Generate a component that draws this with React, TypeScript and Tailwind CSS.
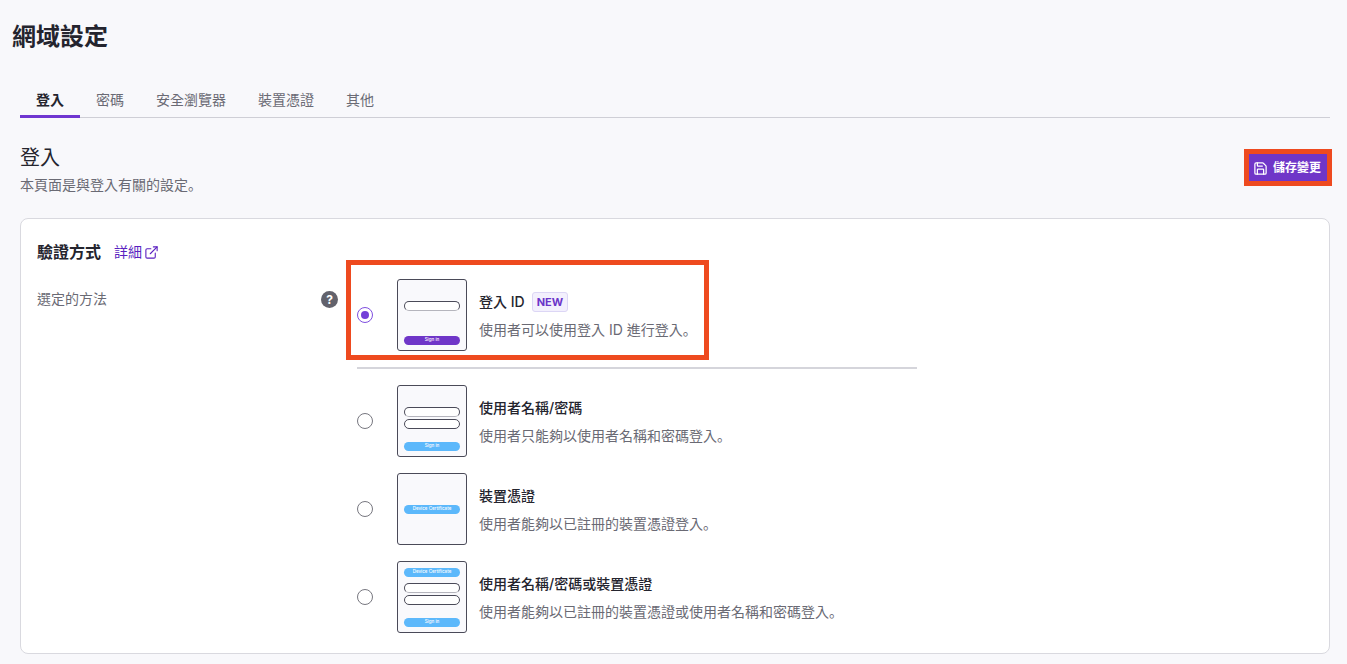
import { ExternalLink, Save } from 'lucide-react'

const tabs = ['登入', '密碼', '安全瀏覽器', '裝置憑證', '其他']

// the reference sets the full stop low and to the left, as the SC cut does
const Stop = () => <span className="font-['Noto_Sans_CJK_SC']">。</span>

function Field({ bottomLine = true }: { bottomLine?: boolean }) {
  return (
    <div
      className={`h-[10px] w-[56px] rounded-full border border-[#4a4a58] bg-white ${
        bottomLine ? 'border-b-[#b5b5bd]' : ''
      }`}
    />
  )
}

function Fields() {
  return (
    <div className="flex flex-col gap-[2px]">
      <Field />
      <Field bottomLine={false} />
    </div>
  )
}

function ThumbButton({ label, color }: { label: string; color: string }) {
  return (
    <div
      className={`flex h-[9px] w-[56px] shrink-0 items-center justify-center rounded-full text-[4.5px] font-medium leading-none text-white ${color}`}
    >
      {label}
    </div>
  )
}

function Thumb({ children, justify }: { children: React.ReactNode; justify: string }) {
  return (
    <div
      className={`flex h-[72px] w-[70px] shrink-0 flex-col items-center rounded-[3px] border border-[#4a4a58] bg-[#f9f9fc] ${justify}`}
    >
      {children}
    </div>
  )
}

const Radio = ({ checked }: { checked?: boolean }) =>
  checked ? (
    <span className="flex h-4 w-4 shrink-0 items-center justify-center rounded-full border border-[#7f4fe0] bg-white">
      <span className="h-2 w-2 rounded-full bg-[#7440d8]" />
    </span>
  ) : (
    <span className="h-4 w-4 shrink-0 rounded-full border border-[#77777f] bg-white" />
  )

function Method({
  title,
  desc,
  thumb,
  checked,
  badge,
}: {
  title: string
  desc: string
  thumb: React.ReactNode
  checked?: boolean
  badge?: boolean
}) {
  return (
    <div className="flex items-center">
      <Radio checked={checked} />
      <div className="ml-6">{thumb}</div>
      <div className="ml-3 pt-[1px]">
        <div className="flex h-5 items-center gap-[7px] text-[14px] font-medium leading-5 text-[#24242e]">
          {title}
          {badge && (
            <span className="rounded-[3px] border border-[#dcd6f5] bg-[#f3f0fd] px-[4px] text-[11px] font-bold leading-[18px] text-[#6b35c9]">
              NEW
            </span>
          )}
        </div>
        <p className="mt-[7px] text-[14px] leading-5 text-[#6a6a74]">
          {desc}
          <Stop />
        </p>
      </div>
    </div>
  )
}

export default function App() {
  return (
    <div className="h-[664px] overflow-hidden bg-[#f8f8fb] font-['Inter','Noto_Sans_CJK_TC',sans-serif] text-[#24242e]">
      <h1 className="pl-3 pt-[21px] text-[24px] font-bold leading-8">網域設定</h1>

      <div className="ml-5 mt-[29px] flex w-[1310px] border-b border-[#cfcfd6]">
        {tabs.map((t, i) => (
          <div
            key={t}
            className={`-mb-px h-[36px] px-4 pt-2 text-[14px] leading-5 ${
              i === 0
                ? 'border-b-[3px] border-[#6f36d0] font-bold text-[#24242e]'
                : 'text-[#6a6a74]'
            }`}
          >
            {t}
          </div>
        ))}
      </div>

      <div className="ml-5 mt-[25px] flex w-[1312px] items-start justify-between">
        <div>
          <h2 className="text-[20px] leading-[30px]">登入</h2>
          <p className="mt-[1px] text-[14px] leading-5 text-[#6a6a74]">
            本頁面是與登入有關的設定
            <Stop />
          </p>
        </div>
        <div className="mt-[6px] border-[5px] border-[#ee4a1f]">
          <button className="flex h-[27px] items-center gap-[5px] bg-[#6f36c8] pl-1 pr-[6px] pt-[1px] text-[12px] font-bold text-white">
            <Save size={15} strokeWidth={2} />
            儲存變更
          </button>
        </div>
      </div>

      <section className="ml-5 mt-[23px] h-[436px] w-[1310px] rounded-[8px] border border-[#d9d9df] bg-white pl-4 pt-[23px]">
        <div className="flex items-center">
          <h3 className="text-[16px] font-bold leading-5">驗證方式</h3>
          <a className="ml-[13px] flex items-center gap-[2px] text-[14px] leading-5 text-[#5a1fc0]">
            詳細
            <ExternalLink size={15} strokeWidth={1.75} />
          </a>
        </div>

        <div className="mt-[17px] flex">
          <div className="flex w-[301px] justify-between pt-[10px]">
            <span className="text-[14px] leading-5 text-[#6a6a74]">選定的方法</span>
            <span className="mt-[2px] flex h-[17px] w-[17px] items-center justify-center rounded-full bg-[#62626c] text-[12px] font-bold leading-none text-white">
              ?
            </span>
          </div>

          <div className="ml-[19px] w-[560px]">
            <div className="relative">
              <Method
                checked
                badge
                title="登入 ID"
                desc="使用者可以使用登入 ID 進行登入"
                thumb={
                  <Thumb justify="justify-between pt-[21px] pb-[5px]">
                    <Field />
                    <ThumbButton label="Sign in" color="bg-[#6f36c8]" />
                  </Thumb>
                }
              />
              <div className="pointer-events-none absolute -left-[11px] -top-[19px] h-[100px] w-[363px] border-[5px] border-[#ee4a1f]" />
            </div>
            <div className="my-4 h-[2px] bg-[#d5d5db]" />
            <div className="flex flex-col gap-4">
              <Method
                title="使用者名稱/密碼"
                desc="使用者只能夠以使用者名稱和密碼登入"
                thumb={
                  <Thumb justify="justify-between pt-[21px] pb-[5px]">
                    <Fields />
                    <ThumbButton label="Sign in" color="bg-[#5cb8fb]" />
                  </Thumb>
                }
              />
              <Method
                title="裝置憑證"
                desc="使用者能夠以已註冊的裝置憑證登入"
                thumb={
                  <Thumb justify="justify-center">
                    <ThumbButton label="Device Certificate" color="bg-[#5cb8fb]" />
                  </Thumb>
                }
              />
              <Method
                title="使用者名稱/密碼或裝置憑證"
                desc="使用者能夠以已註冊的裝置憑證或使用者名稱和密碼登入"
                thumb={
                  <Thumb justify="justify-start pt-[6px] pb-[5px]">
                    <ThumbButton label="Device Certificate" color="bg-[#5cb8fb]" />
                    <div className="mt-[6px]">
                      <Fields />
                    </div>
                    <div className="mt-auto">
                      <ThumbButton label="Sign in" color="bg-[#5cb8fb]" />
                    </div>
                  </Thumb>
                }
              />
            </div>
          </div>
        </div>
      </section>
    </div>
  )
}
